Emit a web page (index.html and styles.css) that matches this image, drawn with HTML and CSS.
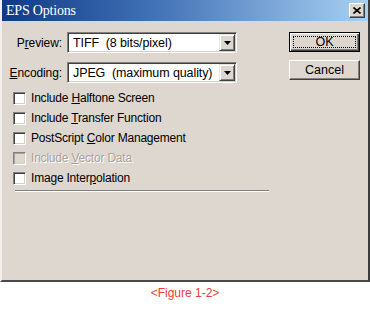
FILE: index.html
```html
<!DOCTYPE html>
<html lang="en">
<head>
    <meta charset="UTF-8">
    <title>EPS Options</title>
    <link rel="stylesheet" href="styles.css">
</head>
<body>
    <div class="window">
        <div class="titlebar">
            <span class="title">EPS Options</span>
            <button class="close">
                <svg width="8" height="7" viewBox="0 0 8 7">
                    <path d="M0.5 0.5 L7.5 6.5 M7.5 0.5 L0.5 6.5" stroke="#000" stroke-width="1.6" fill="none"/>
                </svg>
            </button>
        </div>
        <div class="content">
            <div class="form">
                <div class="field">
                    <label class="label">P<u>r</u>eview:</label>
                    <div class="select">
                        <span class="value">TIFF&nbsp; (8 bits/pixel)</span>
                        <span class="drop"><svg width="7" height="4" viewBox="0 0 7 4"><path d="M0 0 H7 L3.5 4 Z" fill="#000"/></svg></span>
                    </div>
                </div>
                <div class="field">
                    <label class="label"><u>E</u>ncoding:</label>
                    <div class="select">
                        <span class="value">JPEG&nbsp; (maximum quality)</span>
                        <span class="drop"><svg width="7" height="4" viewBox="0 0 7 4"><path d="M0 0 H7 L3.5 4 Z" fill="#000"/></svg></span>
                    </div>
                </div>
                <ul class="checks">
                    <li class="check"><span class="box"></span><span>Include <u>H</u>alftone Screen</span></li>
                    <li class="check"><span class="box"></span><span>Include <u>T</u>ransfer Function</span></li>
                    <li class="check"><span class="box"></span><span>PostScript <u>C</u>olor Management</span></li>
                    <li class="check disabled"><span class="box"></span><span>Include <u>V</u>ector Data</span></li>
                    <li class="check"><span class="box"></span><span>Image Inter<u>p</u>olation</span></li>
                </ul>
                <div class="sep"></div>
            </div>
            <div class="buttons">
                <button class="btn default">OK</button>
                <button class="btn">Cancel</button>
            </div>
        </div>
    </div>
    <p class="caption">&lt;Figure 1-2&gt;</p>
</body>
</html>
```

FILE: styles.css
```css
body {
    margin: 0;
    background: #fff;
    font-family: "Liberation Sans", Arial, sans-serif;
    font-size: 12px;
    color: #000;
}

.window {
    box-sizing: border-box;
    width: 370px;
    height: 282px;
    background: #ded7d0;
    border-left: 2px solid #f2efec;
    border-right: 2px solid #3c3c3c;
    border-bottom: 2px solid #4a4a4a;
}

.titlebar {
    height: 21px;
    display: flex;
    align-items: center;
    justify-content: space-between;
    background: linear-gradient(to right, #0f3a86, #3f6fb4 40%, #a8d0f2);
}

.title {
    padding-left: 4px;
    color: #fff;
    font-family: "Liberation Serif", "Times New Roman", serif;
    font-size: 14px;
    letter-spacing: -0.2px;
}

.close {
    box-sizing: border-box;
    width: 16px;
    height: 15px;
    margin-right: 3px;
    padding: 0;
    display: flex;
    align-items: center;
    justify-content: center;
    background: #ded7d0;
    border: 1px solid;
    border-color: #fff #404040 #404040 #fff;
    box-shadow: inset -1px -1px #808080;
}

.content {
    display: flex;
    padding-top: 11px;
}

.form {
    width: 267px;
}

.field {
    display: flex;
    align-items: center;
    height: 21px;
}

.field + .field {
    margin-top: 9px;
}

.label {
    width: 60px;
    margin-right: 5px;
    text-align: right;
    letter-spacing: -0.1px;
}

.select {
    box-sizing: border-box;
    width: 170px;
    height: 21px;
    display: flex;
    align-items: center;
    justify-content: space-between;
    background: #fff;
    border: 1px solid;
    border-color: #808080 #fff #fff #808080;
    box-shadow: inset 1px 1px #404040, inset -1px -1px #d4d0c8;
    padding: 1px;
}

.value {
    padding-left: 4px;
    font-size: 12.5px;
    letter-spacing: -0.1px;
}

.drop {
    box-sizing: border-box;
    width: 16px;
    height: 17px;
    display: flex;
    align-items: center;
    justify-content: center;
    background: #ded7d0;
    border: 1px solid;
    border-color: #e8e4e0 #404040 #404040 #e8e4e0;
    box-shadow: inset 1px 1px #fff, inset -1px -1px #808080;
}

.checks {
    list-style: none;
    margin: 5px 0 0;
    padding: 0 0 0 11px;
}

.check {
    height: 20px;
    display: flex;
    align-items: center;
    letter-spacing: -0.2px;
}

.box {
    box-sizing: border-box;
    width: 13px;
    height: 13px;
    margin-right: 5px;
    background: #fff;
    border: 1px solid;
    border-color: #808080 #fff #fff #808080;
    box-shadow: inset 1px 1px #404040, inset -1px -1px #d4d0c8;
}

.disabled {
    color: #a9a29b;
    text-shadow: 1px 1px #fff;
}

.disabled .box {
    background: #ded7d0;
    box-shadow: inset 1px 1px #a9a29b, inset -1px -1px #d4d0c8;
}

.sep {
    margin: 2px 0 0 13px;
    width: 254px;
    height: 2px;
    border-top: 1px solid #808080;
    border-bottom: 1px solid #fff;
    box-sizing: border-box;
}

.buttons {
    display: flex;
    flex-direction: column;
    gap: 8px;
    margin-left: 20px;
}

.btn {
    box-sizing: border-box;
    width: 71px;
    height: 20px;
    padding: 0;
    font-family: "Liberation Sans", Arial, sans-serif;
    font-size: 12.5px;
    color: #000;
    background: #ded7d0;
    border: 1px solid;
    border-color: #fff #404040 #404040 #fff;
    box-shadow: inset -1px -1px #808080;
}

.btn.default {
    border-color: #000;
    box-shadow: inset 1px 1px #fff, inset -1px -1px #404040, inset -2px -2px #808080;
    outline: 1px dotted #000;
    outline-offset: -5px;
}

.caption {
    width: 370px;
    margin: 4px 0 0;
    text-align: center;
    color: #ee3b3b;
    font-size: 12px;
}
```
